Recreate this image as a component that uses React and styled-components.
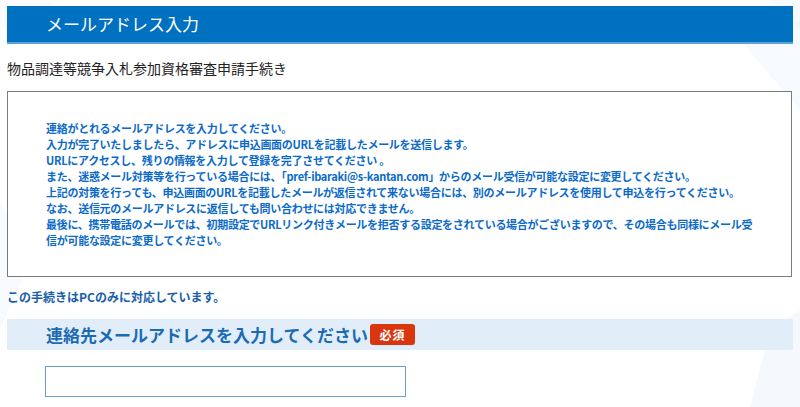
import React from "react";
import styled, { createGlobalStyle } from "styled-components";

const GlobalStyle = createGlobalStyle`
  html, body {
    margin: 0;
    padding: 0;
    background: #ffffff;
  }
  body {
    font-family: "Noto Sans CJK JP", "Noto Sans", sans-serif;
    color: #222;
  }
`;

const Page = styled.div`
  position: relative;
  width: 800px;
  height: 407px;
  overflow: hidden;
  padding: 6px 0 0 7px;
  box-sizing: border-box;
`;

const Backdrop = styled.svg`
  position: absolute;
  inset: 0;
  z-index: 0;
  pointer-events: none;
`;

const Content = styled.div`
  position: relative;
  z-index: 1;
  width: 786px;
  display: flex;
  flex-direction: column;
`;

const Header = styled.h1`
  margin: 0;
  height: 38px;
  box-sizing: border-box;
  background: #0070c0;
  border-bottom: 2px solid #5ba3dc;
  color: #ffffff;
  font-size: 17px;
  font-weight: 400;
  line-height: 36px;
  padding-left: 39px;
`;

const Subtitle = styled.p`
  margin: 14px 0 0;
  font-size: 14px;
  line-height: 20px;
  color: #222;
`;

const NoticeBox = styled.div`
  margin-top: 13px;
  width: 785px;
  box-sizing: border-box;
  border: 1px solid #7a7a7a;
  background: #ffffff;
  padding: 28px 20px 28px 38px;
`;

const Line = styled.div`
  font-size: 11px;
  line-height: 16px;
  font-weight: 700;
  letter-spacing: -0.28px;
  color: #0b6ac8;
  white-space: nowrap;
`;

const PcNote = styled.p`
  margin: 11px 0 0;
  font-size: 12px;
  line-height: 18px;
  font-weight: 700;
  color: #1a5ea8;
`;

const SectionBar = styled.div`
  margin-top: 13px;
  height: 31px;
  background: #e1eef9;
  display: flex;
  align-items: center;
  gap: 2px;
  padding-left: 39px;
`;

const SectionTitle = styled.h2`
  margin: 0;
  font-size: 17px;
  line-height: 31px;
  font-weight: 700;
  color: #1c6bb2;
`;

const Required = styled.span`
  display: inline-flex;
  align-items: center;
  justify-content: center;
  width: 45px;
  height: 21px;
  border-radius: 3px;
  background: #d9360f;
  color: #ffffff;
  font-size: 12px;
  font-weight: 700;
  letter-spacing: 1px;
`;

const EmailInput = styled.input`
  margin: 16px 0 0 38px;
  width: 361px;
  height: 31px;
  box-sizing: border-box;
  border: 1px solid #6a9fd2;
  background: #ffffff;
  outline: none;
  padding: 0 6px;
  font-size: 13px;
  font-family: inherit;
`;

const lines = [
  "連絡がとれるメールアドレスを入力してください。",
  "入力が完了いたしましたら、アドレスに申込画面のURLを記載したメールを送信します。",
  "URLにアクセスし、残りの情報を入力して登録を完了させてください 。",
  "また、迷惑メール対策等を行っている場合には、「pref-ibaraki@s-kantan.com」からのメール受信が可能な設定に変更してください。",
  "上記の対策を行っても、申込画面のURLを記載したメールが返信されて来ない場合には、別のメールアドレスを使用して申込を行ってください。",
  "なお、送信元のメールアドレスに返信しても問い合わせには対応できません。",
  "最後に、携帯電話のメールでは、初期設定でURLリンク付きメールを拒否する設定をされている場合がございますので、その場合も同様にメール受",
  "信が可能な設定に変更してください。",
];

export default function App() {
  return (
    <>
      <GlobalStyle />
      <Page>
        <Backdrop width="800" height="407" viewBox="0 0 800 407">
          <polygon points="740,40 800,20 800,110" fill="#eaf3fc" opacity="0.45" />
          <polygon points="770,0 800,0 800,30" fill="#eef5fd" opacity="0.45" />
          <polygon points="0,200 30,260 0,330" fill="#eef5fc" opacity="0.45" />
          <polygon points="770,330 800,310 800,407 750,407" fill="#e8f2fc" opacity="0.45" />
          <polygon points="0,0 60,0 0,30" fill="#f1f7fd" opacity="0.45" />
        </Backdrop>
        <Content>
          <Header>メールアドレス入力</Header>
          <Subtitle>物品調達等競争入札参加資格審査申請手続き</Subtitle>
          <NoticeBox>
            {lines.map((text, i) => (
              <Line key={i}>{text}</Line>
            ))}
          </NoticeBox>
          <PcNote>この手続きはPCのみに対応しています。</PcNote>
          <SectionBar>
            <SectionTitle>連絡先メールアドレスを入力してください</SectionTitle>
            <Required>必須</Required>
          </SectionBar>
          <EmailInput type="email" aria-label="連絡先メールアドレス" />
        </Content>
      </Page>
    </>
  );
}
